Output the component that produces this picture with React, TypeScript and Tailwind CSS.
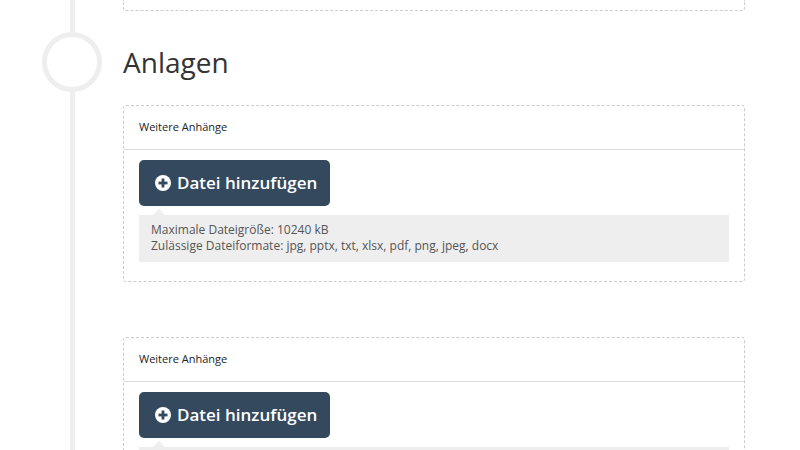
import React from 'react';

const font = { fontFamily: '"Open Sans", "Liberation Sans", sans-serif' };

const PlusCircle: React.FC = () => (
  <svg width="16" height="16" viewBox="0 0 16 16" className="shrink-0">
    <circle cx="8" cy="8" r="8" fill="#ffffff" />
    <rect x="3.5" y="6.6" width="9" height="2.8" fill="#34495e" />
    <rect x="6.6" y="3.5" width="2.8" height="9" fill="#34495e" />
  </svg>
);

const UploadCard: React.FC<{ showInfo?: boolean }> = ({ showInfo = true }) => (
  <div className="shrink-0 border border-dashed border-[#cccccc] rounded-[3px] bg-white">
    <div className="h-[44px] flex items-center px-[15px] border-b border-[#dddddd] text-[11px] text-[#222222]">
      Weitere Anhänge
    </div>
    <div className="px-[15px] pt-[10px] pb-[19px]">
      <button className="w-[191px] h-[46px] pl-[16px] rounded-[5px] bg-[#34495e] text-white text-[17px] font-semibold flex items-center gap-[6px]">
        <PlusCircle />
        <span>Datei hinzufügen</span>
      </button>
      {showInfo && (
        <div className="relative mt-[9px] bg-[#eeeeee] px-[12px] pt-[7px] pb-[8px] text-[12px] leading-[16px] text-[#555555]">
          <div className="absolute -top-[6px] left-[14px] w-0 h-0 border-l-[6px] border-r-[6px] border-b-[6px] border-l-transparent border-r-transparent border-b-[#eeeeee]" />
          <div>Maximale Dateigröße: 10240 kB</div>
          <div>Zulässige Dateiformate: jpg, pptx, txt, xlsx, pdf, png, jpeg, docx</div>
        </div>
      )}
    </div>
  </div>
);

export default function App() {
  return (
    <div className="w-[800px] h-[450px] overflow-hidden bg-white flex" style={font}>
      <div className="w-[123px] shrink-0 pl-[42px]">
        <div className="w-[60px] h-full flex flex-col items-center">
          <div className="w-[5px] h-[32px] shrink-0 bg-[#eeeeee]" />
          <div className="w-[60px] h-[60px] rounded-full border-[5px] border-[#eeeeee] shrink-0" />
          <div className="w-[5px] flex-1 bg-[#eeeeee]" />
        </div>
      </div>
      <div className="w-[622px] flex flex-col">
        <div className="h-[11px] shrink-0 border-x border-b border-dashed border-[#cccccc] rounded-b-[3px]" />
        <h2 className="h-[94px] shrink-0 flex items-center text-[28px] text-[#333333] pt-[8px]">Anlagen</h2>
        <UploadCard />
        <div className="h-[55px] shrink-0" />
        <UploadCard />
      </div>
    </div>
  );
}
